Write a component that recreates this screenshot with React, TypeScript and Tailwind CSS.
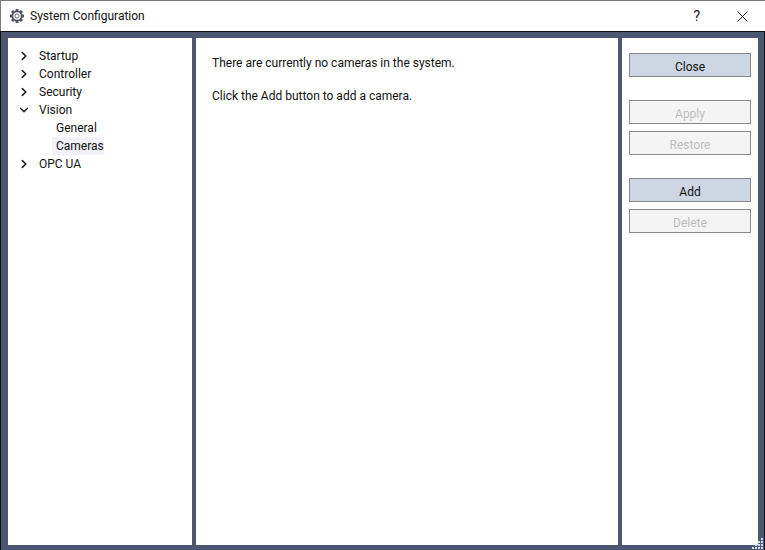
import { ChevronDown, ChevronRight } from "lucide-react";

const tree = [
  { label: "Startup" },
  { label: "Controller" },
  { label: "Security" },
  { label: "Vision", open: true, children: ["General", "Cameras"] },
  { label: "OPC UA" },
];

function GearIcon() {
  return (
    <svg className="ml-[8px] h-[16px] w-[16px]" viewBox="0 0 16 16" fill="none">
      {[0, 45, 90, 135, 180, 225, 270, 315].map((angle) => (
        <rect key={angle} x="6.5" y="1" width="3" height="3" fill="#4f5660" transform={`rotate(${angle} 8 8)`} />
      ))}
      <circle cx="8" cy="8" r="4.6" fill="#ffffff" stroke="#4f5660" strokeWidth="1.7" />
      <circle cx="8" cy="8" r="2" stroke="#6b727c" strokeWidth="1" />
    </svg>
  );
}

function TreeRow({ label, open }: { label: string; open?: boolean }) {
  return (
    <div className="flex h-[18px] items-center">
      <div className="flex w-[31px] pl-[9px]">
        {open ? (
          <ChevronDown className="h-[14px] w-[14px] text-[#1a1a1a]" strokeWidth={2.4} />
        ) : (
          <ChevronRight className="h-[14px] w-[14px] text-[#1a1a1a]" strokeWidth={2.8} />
        )}
      </div>
      <span>{label}</span>
    </div>
  );
}

function ActionButton({ label, active, className }: { label: string; active?: boolean; className?: string }) {
  return (
    <div
      className={`flex h-[24px] items-center justify-center border border-[#888888] pt-[3px] ${
        active ? "bg-[#cfd6e3] text-[#111111]" : "bg-[#f4f4f4] text-[#bdbdbd]"
      } ${className ?? ""}`}
    >
      {label}
    </div>
  );
}

export default function App() {
  return (
    <div className="flex h-[550px] w-[765px] flex-col overflow-hidden bg-white font-['Roboto',sans-serif] text-[12px] text-[#111111]">
      <header className="flex h-[31px] shrink-0 items-center border-t border-l border-[#7a7a7a] bg-white">
        <GearIcon />
        <span className="ml-[5px] flex-1">System Configuration</span>
        <span className="mr-[37px] text-[14px]">?</span>
        <svg className="mr-[17px] h-[11px] w-[11px]" viewBox="0 0 11 11">
          <path d="M0.5 0.5 L10.5 10.5 M10.5 0.5 L0.5 10.5" stroke="#222222" strokeWidth="1" fill="none" />
        </svg>
      </header>
      <div className="relative flex min-h-0 flex-1 gap-[4px] border-t border-r border-l border-[#111111] bg-[#4b5770] pt-[6px] pr-[6px] pb-[5px] pl-[7px]">
        <aside className="w-[184px] shrink-0 bg-white pt-[9px]">
          {tree.map((node) => (
            <div key={node.label}>
              <TreeRow label={node.label} open={node.open} />
              {node.children?.map((child) => (
                <div key={child} className="flex h-[18px] items-center pl-[44px]">
                  <span
                    className={`flex h-[18px] items-center pl-[4px] ${child === "Cameras" ? "bg-[#f2f1fa]" : ""}`}
                  >
                    {child}
                  </span>
                </div>
              ))}
            </div>
          ))}
        </aside>
        <main className="w-[422px] shrink-0 bg-white pt-[16px] pl-[16px]">
          <p className="h-[18px] leading-[18px]">There are currently no cameras in the system.</p>
          <p className="mt-[15px] h-[18px] leading-[18px]">Click the Add button to add a camera.</p>
        </main>
        <aside className="flex w-[136px] shrink-0 flex-col bg-white px-[7px] pt-[15px]">
          <ActionButton label="Close" active />
          <ActionButton label="Apply" className="mt-[23px]" />
          <ActionButton label="Restore" className="mt-[7px]" />
          <ActionButton label="Add" active className="mt-[23px]" />
          <ActionButton label="Delete" className="mt-[7px]" />
        </aside>
        <svg className="absolute right-[0px] bottom-[0px] h-[12px] w-[12px]" viewBox="0 0 12 12">
          {[
            [9, 0],
            [9, 3],
            [6, 3],
            [9, 6],
            [6, 6],
            [3, 6],
            [9, 9],
            [6, 9],
            [3, 9],
            [0, 9],
          ].map(([x, y]) => (
            <rect key={`${x}-${y}`} x={x} y={y} width="2" height="2" fill="#d5dbe8" />
          ))}
        </svg>
      </div>
    </div>
  );
}
